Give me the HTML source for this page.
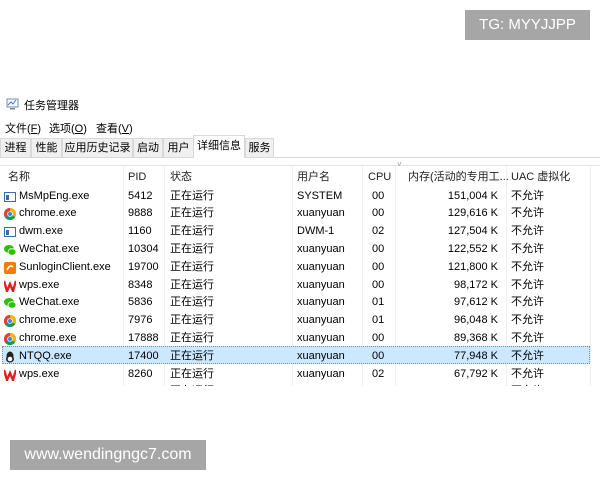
<!DOCTYPE html>
<html><head><meta charset="utf-8"><style>
body{margin:0;width:600px;height:480px;background:#fff;position:relative;overflow:hidden;font-family:"Liberation Sans","Noto Sans CJK SC",sans-serif;font-size:11px;color:#000}
.a{position:absolute;white-space:nowrap}
.tab{position:absolute;top:138px;height:19px;background:#f0f0f0;border:1px solid #d9d9d9;border-bottom:none;box-sizing:border-box;line-height:18px;text-align:center;font-size:11px}
.row{position:absolute;left:0;width:590px;height:17px;line-height:17px}
.row span{position:absolute}
.ic{position:absolute;left:4px;top:3px;width:12px;height:12px}
.sep{position:absolute;top:166px;width:1px;height:220px;background:#f0f0f0}
</style></head><body>
<div class="a" style="left:465px;top:10px;width:125px;height:30px;background:#a6a6a6;color:#fff;font-size:15px;line-height:30px;text-align:center">TG: MYYJJPP</div>

<svg class="a" style="left:6px;top:98px" width="13" height="12"><rect x="1" y="1" width="11" height="8" fill="#fff" stroke="#6a8caf"/><polyline points="2,7 5,4 7,6 10,2" fill="none" stroke="#3a7bd5"/><rect x="4" y="10" width="5" height="1.5" fill="#888"/></svg>
<div class="a" style="left:24px;top:97px;font-size:11px">任务管理器</div>
<div class="a" style="left:5px;top:120px">文件(<u>F</u>)</div>
<div class="a" style="left:49px;top:120px">选项(<u>O</u>)</div>
<div class="a" style="left:96px;top:120px">查看(<u>V</u>)</div>

<div style="position:absolute;left:0;top:157px;width:600px;height:1px;background:#d9d9d9"></div>
<div class="tab" style="left:0;width:31px">进程</div>
<div class="tab" style="left:31px;width:31px">性能</div>
<div class="tab" style="left:62px;width:71px">应用历史记录</div>
<div class="tab" style="left:133px;width:30px">启动</div>
<div class="tab" style="left:163px;width:31px">用户</div>
<div class="tab" style="left:193px;top:135px;height:23px;width:52px;background:#fff;line-height:20px">详细信息</div>
<div class="tab" style="left:245px;width:29px">服务</div>

<div style="position:absolute;left:0;top:165px;width:600px;height:1px;background:#e5e5e5"></div>
<div class="sep" style="left:123px"></div><div class="sep" style="left:164px"></div><div class="sep" style="left:292px"></div><div class="sep" style="left:362px"></div><div class="sep" style="left:395px"></div><div class="sep" style="left:506px"></div><div class="sep" style="left:590px"></div>
<div class="a" style="left:397px;top:160px;color:#999;font-size:8px">˅</div>
<div class="row" style="top:169px;color:#222"><span style="left:8px">名称</span><span style="left:128px">PID</span><span style="left:170px">状态</span><span style="left:297px">用户名</span><span style="left:368px">CPU</span><span style="left:408px">内存(活动的专用工...</span><span style="left:511px">UAC 虚拟化</span></div>

<div style="position:absolute;left:2px;top:346px;width:586px;height:16px;background:#cce8ff;border:1px dotted #6a8caf"></div>

<div id="rows"></div>
<script>
var d=[["MsMpEng.exe","5412","SYSTEM","00","151,004 K","m"],["chrome.exe","9888","xuanyuan","00","129,616 K","c"],["dwm.exe","1160","DWM-1","02","127,504 K","m"],["WeChat.exe","10304","xuanyuan","00","122,552 K","w"],["SunloginClient.exe","19700","xuanyuan","00","121,800 K","s"],["wps.exe","8348","xuanyuan","00","98,172 K","p"],["WeChat.exe","5836","xuanyuan","01","97,612 K","w"],["chrome.exe","7976","xuanyuan","01","96,048 K","c"],["chrome.exe","17888","xuanyuan","00","89,368 K","c"],["NTQQ.exe","17400","xuanyuan","00","77,948 K","q"],["wps.exe","8260","xuanyuan","02","67,792 K","p"],["NTQQ.exe","16336","xuanyuan","00","64,656 K","q"]];
var ic={m:'<rect x="0.5" y="1.5" width="11" height="9" fill="#fff" stroke="#3b6ea5"/><rect x="2" y="4" width="3" height="5" fill="#3b6ea5"/>',
c:'<circle cx="6" cy="6" r="6" fill="#db4437"/><path d="M6 6 L11.2 9 A6 6 0 0 1 0.8 9Z" fill="#0f9d58"/><path d="M6 6 L0.8 9 A6 6 0 0 1 6 0Z" fill="#db4437"/><path d="M6 6 L11.2 9 A6 6 0 0 0 6 0Z" fill="#f4b400"/><circle cx="6" cy="6" r="2.8" fill="#fff"/><circle cx="6" cy="6" r="2.1" fill="#4285f4"/>',
w:'<ellipse cx="5" cy="5" rx="5" ry="4" fill="#2dc100"/><ellipse cx="8" cy="8" rx="4" ry="3.3" fill="#2dc100" stroke="#fff" stroke-width=".8"/>',
s:'<rect x="0" y="0" width="12" height="12" rx="2" fill="#f57c00"/><path d="M3 8 Q6 2 9 5" stroke="#fff" stroke-width="1.6" fill="none"/>',
p:'<path d="M0 1 L3 11 L6 4 L9 11 L12 1" stroke="#e02020" stroke-width="2.4" fill="none"/>',
q:'<ellipse cx="6" cy="5" rx="3.5" ry="4.5" fill="#222"/><ellipse cx="6" cy="8" rx="4" ry="3.5" fill="#222"/><ellipse cx="6" cy="8" rx="2.3" ry="2.3" fill="#fff"/>'};
var h='';d.forEach(function(r,i){var t=195+i*17.8-7.5;h+='<div class="row" style="top:'+t+'px"><svg class="ic" width="12" height="12">'+ic[r[5]]+'</svg><span style="left:19px">'+r[0]+'</span><span style="left:128px">'+r[1]+'</span><span style="left:170px">正在运行</span><span style="left:297px">'+r[2]+'</span><span style="left:372px">'+r[3]+'</span><span style="right:92px">'+r[4]+'</span><span style="left:511px">不允许</span></div>';});
document.getElementById('rows').innerHTML=h;
</script>
<div style="position:absolute;left:0;top:386px;width:600px;height:94px;background:#fff"></div>
<div class="a" style="left:10px;top:440px;width:196px;height:30px;background:#a6a6a6;color:#fff;font-size:16px;line-height:30px;text-align:center">www.wendingngc7.com</div>
</body></html>
